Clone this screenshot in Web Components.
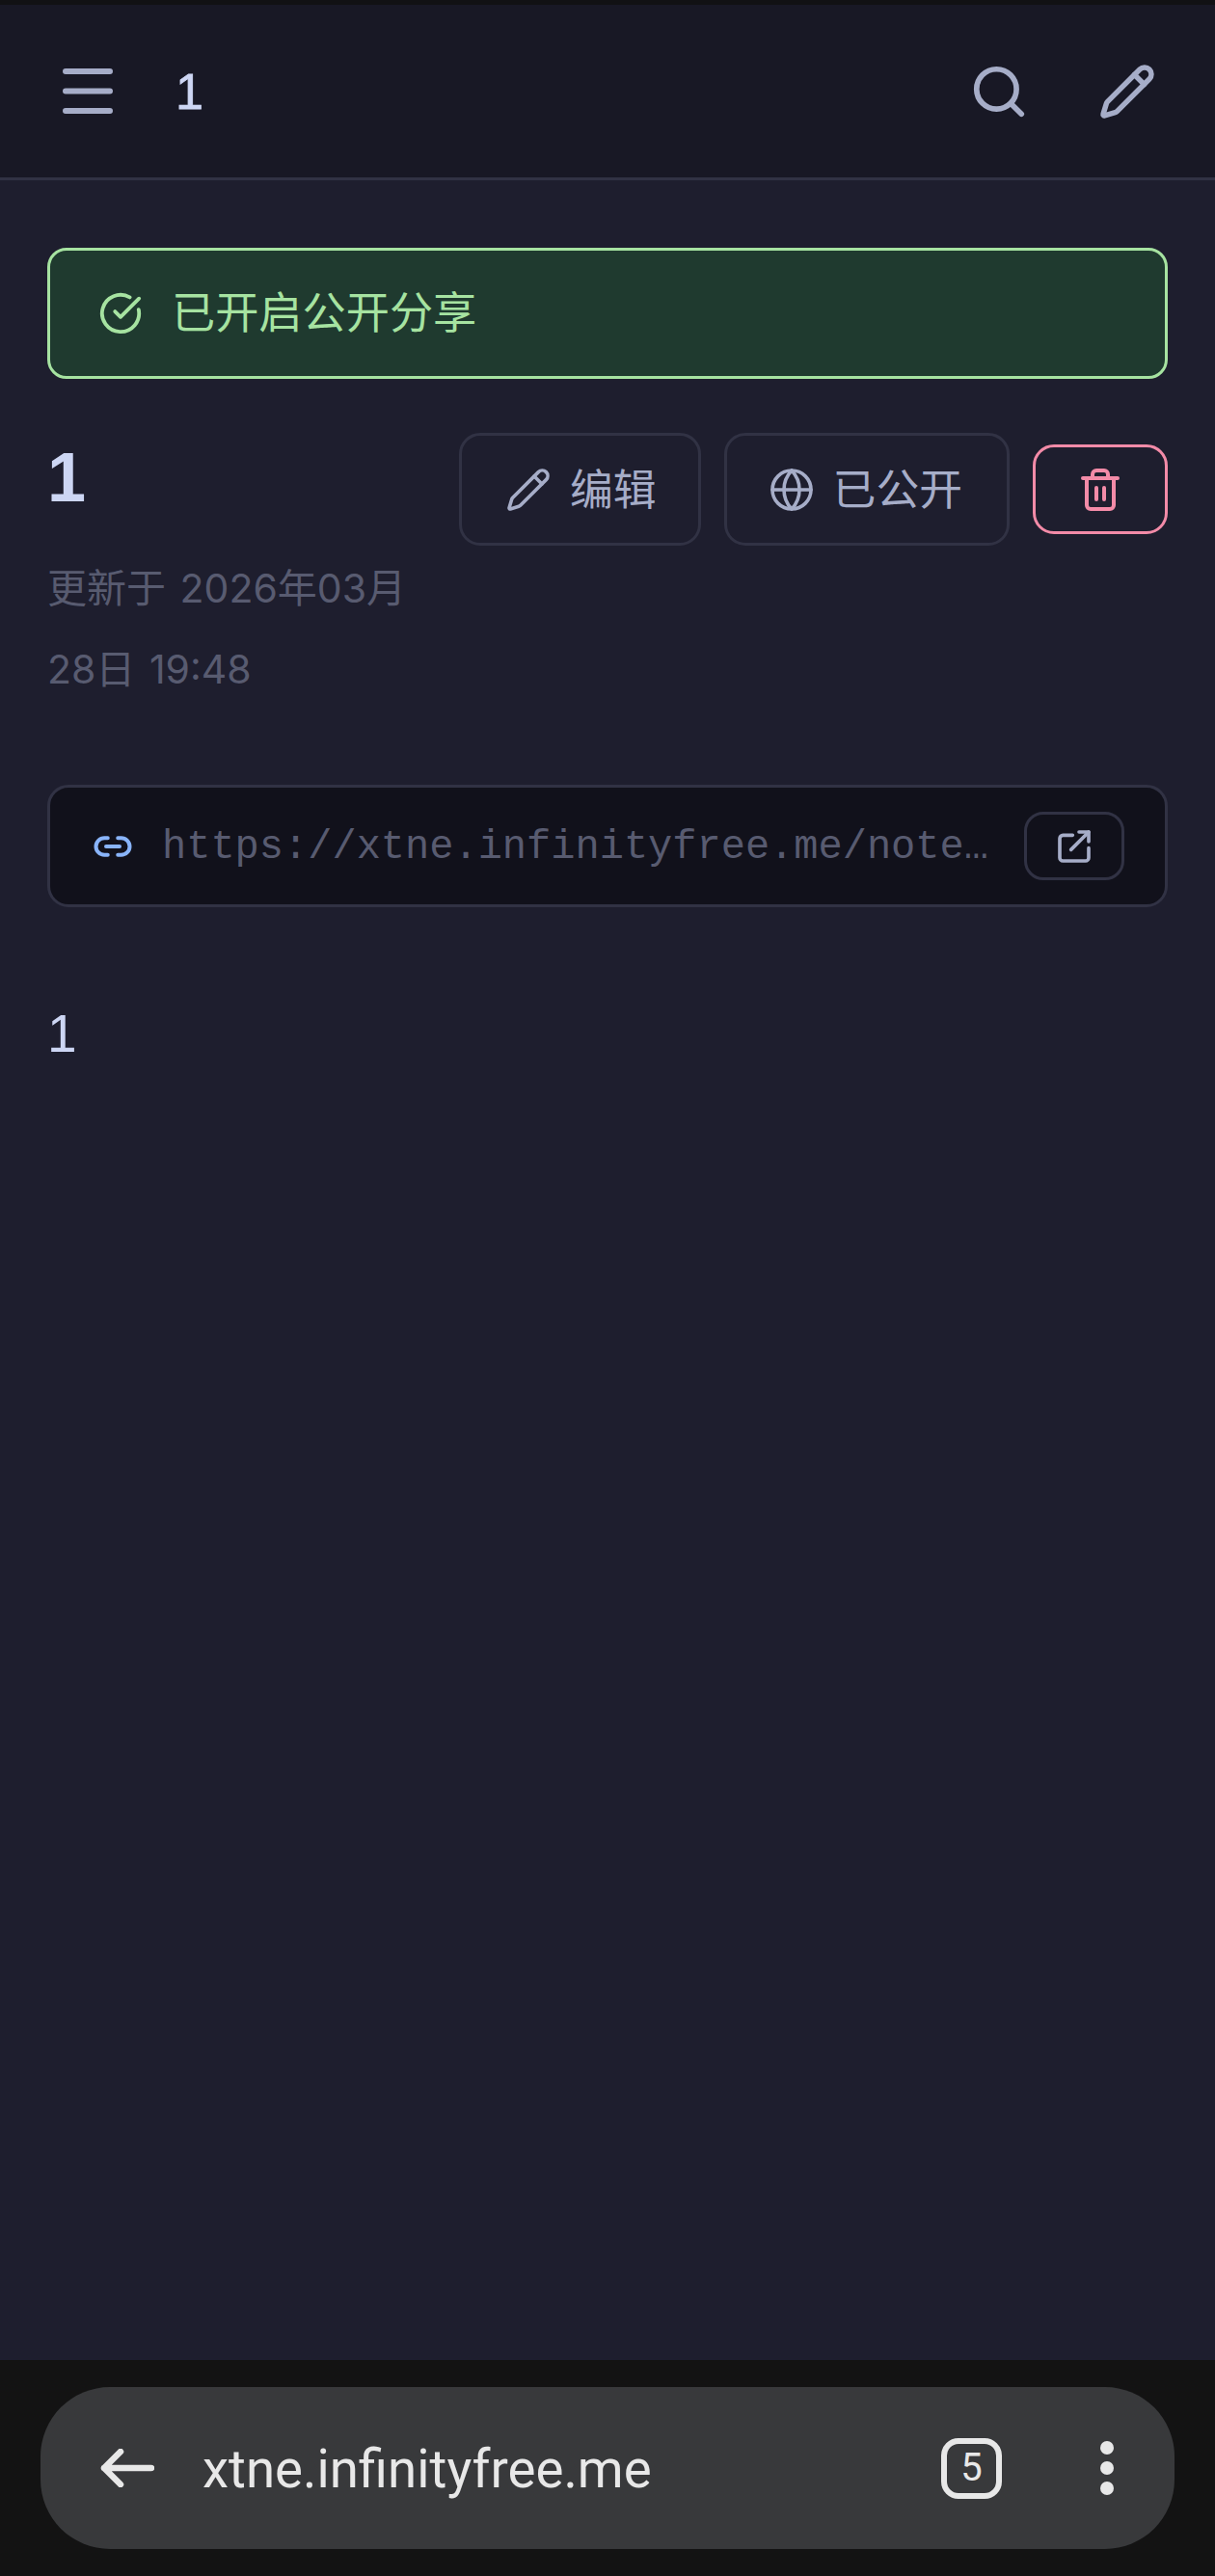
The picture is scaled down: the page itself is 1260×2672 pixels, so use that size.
<!doctype html>
<html><head><meta charset="utf-8">
<style>
html,body{margin:0;padding:0;background:#1e1e2e}
body{width:1260px;height:2672px;overflow:hidden;font-family:"Liberation Sans","Noto Sans CJK SC",sans-serif}
</style></head>
<body>
<note-app></note-app>
<script>
const svg=(w,h,vb,body,extra='')=>`<svg width="${w}" height="${h}" viewBox="${vb}" fill="none" stroke="currentColor" stroke-linecap="round" stroke-linejoin="round" ${extra}>${body}</svg>`;
const pencilPath='<path d="M21.17 6.81a2.82 2.82 0 0 0-3.99-3.99L3.84 16.17a2 2 0 0 0-.5.83l-1.32 4.35a.5.5 0 0 0 .62.62l4.35-1.32a2 2 0 0 0 .83-.5z"/><path d="m15 5 4 4"/>';
function def(name,html){customElements.define(name,class extends HTMLElement{constructor(){super();this.attachShadow({mode:'open'}).innerHTML=html;}});}

def('top-bar',`<style>
:host{display:flex;box-sizing:border-box;height:182px;align-items:center;background:#181825;border-bottom:3px solid #313244;padding:0 61px 0 65px;color:#a6adc8}
h1{margin:0 0 0 65px;font:400 52px/1 "Liberation Sans","Noto Sans CJK SC",sans-serif;-webkit-text-stroke:.8px #cdd6f4;color:#cdd6f4;flex:1}
.s{display:block}
.g{margin-left:72px}
</style>
${svg(52,48,'0 0 52 48','<path d="M3 3H49M3 23.500H49M3 44H49" stroke-width="6"/>','class="s"')}
<h1>1</h1>
${svg(62,62,'0 0 24 24','<circle cx="11" cy="11" r="8"/><path d="m21 21-4.300-4.300"/>','class="s" stroke-width="2.200"')}
<span class="g">${svg(60,60,'0 0 24 24',pencilPath,'class="s" stroke-width="2.200"')}</span>`);

def('share-banner',`<style>
:host{display:flex;box-sizing:border-box;height:136px;align-items:center;gap:30px;padding:0 0 0 50px;background:#1f3a2f;border:3px solid #a6e3a1;border-radius:20px;color:#a6e3a1;font:400 45.200px/1 "Liberation Sans","Noto Sans CJK SC",sans-serif}
svg{display:block}
.x{padding-top:2px}
</style>
${svg(46,46,'0 0 24 24','<path d="M21.800 10A10 10 0 1 1 17 3.340"/><path d="m9 11 3 3L22 4"/>','stroke-width="2"')}
<span class="x"><slot></slot></span>`);

def('act-btn',`<style>
:host{display:inline-flex;box-sizing:border-box;align-items:center;justify-content:center;gap:19px;height:117px;padding:0 46px 0 43px;border:3px solid #313244;border-radius:22px;color:#a6adc8;font:400 44.800px/1 "Liberation Sans","Noto Sans CJK SC",sans-serif}
:host([edit]){padding:0 43px 0 45px}
:host([danger]){height:93px;width:140px;padding:0;gap:0;border-color:#f38ba8;color:#f38ba8}
.x{padding-top:2px}
</style><slot name="i"></slot><span class="x"><slot></slot></span>`);

def('note-head',`<style>
:host{display:flex;justify-content:space-between;align-items:flex-start}
.t{font:700 72px/92px "Liberation Sans","Noto Sans CJK SC",sans-serif;color:#cdd6f4}
.m{width:400px;margin-top:27px;word-spacing:3px;font:400 41px/84px Inter,"Noto Sans CJK SC",sans-serif;color:#585b70}
.a{display:flex;align-items:center;gap:24px}
</style>
<div class="l"><div class="t"><slot name="t"></slot></div><div class="m"><slot name="m"></slot></div></div>
<div class="a"><slot></slot></div>`);

def('link-box',`<style>
:host{display:flex;box-sizing:border-box;height:127px;align-items:center;background:#11111b;border:3px solid #313244;border-radius:22px;padding:0 42px 0 44px;color:#89b4fa}
.u{flex:1;min-width:0;margin-left:30px;padding-top:3px;font:400 42px/1 "Liberation Mono",monospace;color:#585b70;white-space:nowrap;overflow:hidden}
.b{display:flex;box-sizing:border-box;width:104px;height:71px;align-items:center;justify-content:center;border:3px solid #313244;border-radius:20px;color:#a6adc8}
svg{display:block}
</style>
${svg(42,42,'0 0 24 24','<path d="M9 17H7A5 5 0 0 1 7 7h2"/><path d="M15 7h2a5 5 0 1 1 0 10h-2"/><path d="M8 12h8"/>','stroke-width="2.300"')}
<div class="u"><slot></slot></div>
<div class="b">${svg(40,40,'0 0 24 24','<path d="M21 13v6a2 2 0 0 1-2 2H5a2 2 0 0 1-2-2V7a2 2 0 0 1 2-2h6"/><path d="M15 3h6v6"/><path d="M10 14 21 3"/>','stroke-width="2.200"')}</div>`);

def('browser-bar',`<style>
:host{display:flex;box-sizing:border-box;height:224px;padding:28px 42px;background:#131313}
.p{flex:1;display:flex;align-items:center;background:#38393b;border-radius:72px;padding:0 0 0 62px;color:#e8e8e8}
.url{margin-left:50px;padding-top:2px;flex:1;font:400 54.600px/1 Roboto,sans-serif;}
.tab{display:flex;box-sizing:border-box;width:63px;height:63px;align-items:center;justify-content:center;border:6px solid #e8e8e8;border-radius:18px;font:400 40px/1 Roboto,sans-serif}
.d{margin:0 63px 0 102px;width:14px;display:flex;flex-direction:column;gap:7px}
.d i{display:block;width:14px;height:14px;border-radius:50%;background:#e8e8e8}
svg{display:block}
</style>
<div class="p">
${svg(56,40,'0 0 56 40','<path d="M53 20H4M21 3 4 20l17 17" stroke-width="6.500"/>')}
<div class="url"><slot></slot></div>
<div class="tab">5</div>
<div class="d"><i></i><i></i><i></i></div>
</div>`);

def('note-app',`<style>
:host{display:flex;flex-direction:column;width:1260px;height:2672px;background:#1e1e2e}
.st{height:5px;background:#111114}
main{flex:1;display:block;padding:70px 49px 0;color:#cdd6f4}
note-head{margin-top:56px}
link-box{margin-top:78px}
.body{margin-top:100px;font:400 55px/62px "Liberation Sans","Noto Sans CJK SC",sans-serif}
svg{display:block}
</style>
<div class="st"></div>
<top-bar></top-bar>
<main>
<share-banner>已开启公开分享</share-banner>
<note-head>
<span slot="t">1</span>
<span slot="m">更新于 2026年03月28日 19:48</span>
<act-btn edit><span slot="i">${svg(48,48,'0 0 24 24',pencilPath,'stroke-width="1.800"')}</span>编辑</act-btn>
<act-btn><span slot="i">${svg(48,48,'0 0 24 24','<circle cx="12" cy="12" r="10"/><path d="M2 12h20"/><path d="M12 2a14.500 14.500 0 0 0 0 20 14.500 14.500 0 0 0 0-20"/>','stroke-width="1.800"')}</span>已公开</act-btn>
<act-btn danger><span slot="i">${svg(48,48,'0 0 24 24','<path d="M3 6h18"/><path d="M19 6v14a2 2 0 0 1-2 2H7a2 2 0 0 1-2-2V6"/><path d="M8 6V4a2 2 0 0 1 2-2h4a2 2 0 0 1 2 2v2"/><path d="M10 11v6"/><path d="M14 11v6"/>','stroke-width="2"')}</span></act-btn>
</note-head>
<link-box>https://xtne.infinityfree.me/note…</link-box>
<div class="body">1</div>
</main>
<browser-bar>xtne.infinityfree.me</browser-bar>`);
</script>
</body></html>
